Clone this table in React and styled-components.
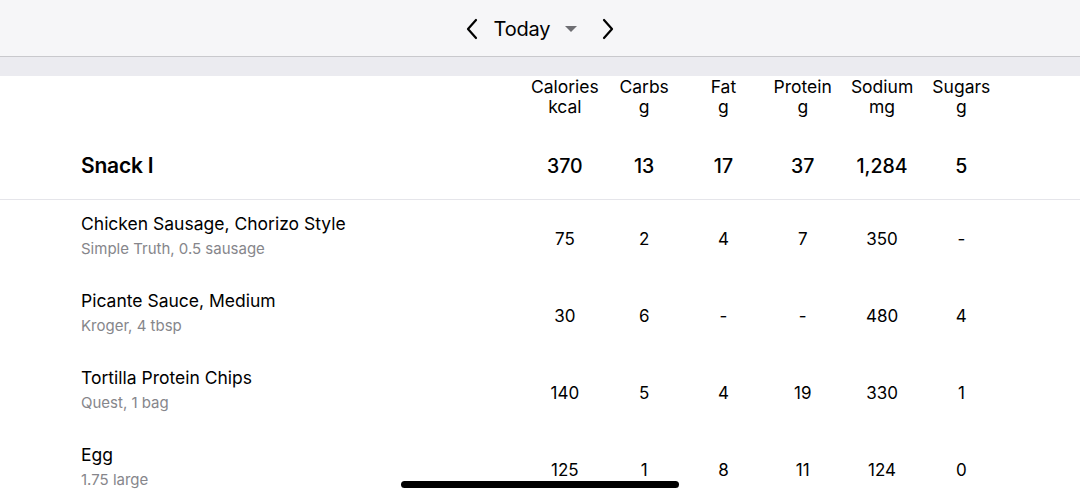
import React from 'react';
import styled, { createGlobalStyle } from 'styled-components';

const Global = createGlobalStyle`
  html, body { margin: 0; padding: 0; background: #fff; }
  body { font-family: Inter, "Noto Sans", sans-serif; color: #000; overflow: hidden; }
`;

const Page = styled.div`
  width: 1080px;
  height: 499px;
  overflow: hidden;
  position: relative;
`;

const NavBar = styled.div`
  height: 56px;
  background: #f6f6f8;
  border-bottom: 1px solid #c9c9cd;
  display: flex;
  align-items: center;
  justify-content: center;
`;

const NavButton = styled.span`
  display: flex;
  align-items: center;
  justify-content: center;
  width: 24px;
  height: 24px;
  margin: ${p => p.$side === 'left' ? '1px 10px 0 0' : '1px 0 0 19px'};
`;

const Title = styled.span`
  font-size: 20px;
  letter-spacing: -0.2px;
  display: flex;
  align-items: center;
  gap: 15px;
  margin-top: 1px;
`;

const Caret = styled.span`
  width: 0;
  height: 0;
  border-left: 6px solid transparent;
  border-right: 6px solid transparent;
  border-top: 6px solid #6e6e73;
  margin-top: 1px;
`;

const Band = styled.div`
  height: 19px;
  background: #ebebf0;
`;

const Row = styled.div`
  display: flex;
  align-items: ${p => p.$align || 'center'};
  height: ${p => p.$h}px;
  padding: 0 79px 0 81px;
  border-bottom: ${p => p.$line ? '1px solid #e5e5ea' : 'none'};
  box-sizing: border-box;
`;

const Label = styled.div`
  flex: 1;
  align-self: stretch;
  display: flex;
  flex-direction: column;
  justify-content: ${p => p.$top ? 'flex-start' : 'center'};
  padding-top: ${p => p.$top ? 13 : 0}px;
`;

const Cell = styled.div`
  width: 79.3px;
  text-align: center;
  font-size: ${p => p.$size || 17}px;
  font-weight: ${p => p.$bold ? 500 : 400};
  line-height: 20px;
  padding-top: ${p => p.$head ? 1 : 0}px;
`;

const MealName = styled.div`
  font-size: 21px;
  font-weight: 600;
  letter-spacing: -0.2px;
`;

const FoodName = styled.div`
  font-size: 17.5px;
  line-height: 22px;
`;

const FoodSub = styled.div`
  font-size: 15px;
  line-height: 22px;
  margin-top: 3px;
  color: #86868b;
`;

const HomeBar = styled.div`
  position: absolute;
  left: 401px;
  top: 481px;
  width: 278px;
  height: 7px;
  border-radius: 4px;
  background: #000;
`;

const Chevron = ({ dir }) => (
  <svg width="14" height="22" viewBox="0 0 14 22">
    <path
      d={dir === 'left' ? 'M11 2 L3 11 L11 20' : 'M3 2 L11 11 L3 20'}
      fill="none"
      stroke="#000"
      strokeWidth="2.2"
      strokeLinecap="round"
      strokeLinejoin="round"
    />
  </svg>
);

const columns = [
  ['Calories', 'kcal'],
  ['Carbs', 'g'],
  ['Fat', 'g'],
  ['Protein', 'g'],
  ['Sodium', 'mg'],
  ['Sugars', 'g'],
];

const foods = [
  { name: 'Chicken Sausage, Chorizo Style', sub: 'Simple Truth, 0.5 sausage', v: ['75', '2', '4', '7', '350', '-'] },
  { name: 'Picante Sauce, Medium', sub: 'Kroger, 4 tbsp', v: ['30', '6', '-', '-', '480', '4'] },
  { name: 'Tortilla Protein Chips', sub: 'Quest, 1 bag', v: ['140', '5', '4', '19', '330', '1'] },
  { name: 'Egg', sub: '1.75 large', v: ['125', '1', '8', '11', '124', '0'] },
];

export default function App() {
  return (
    <Page>
      <Global />
      <NavBar>
        <NavButton $side="left"><Chevron dir="left" /></NavButton>
        <Title>Today <Caret /></Title>
        <NavButton $side="right"><Chevron dir="right" /></NavButton>
      </NavBar>
      <Band />
      <Row $h={56} $align="flex-start">
        <Label />
        {columns.map(([a, b]) => (
          <Cell key={a} $size={17.5} $head>{a}<br />{b}</Cell>
        ))}
      </Row>
      <Row $h={68} $line>
        <Label><MealName>Snack I</MealName></Label>
        {['370', '13', '17', '37', '1,284', '5'].map((v, i) => (
          <Cell key={i} $size={19.5} $bold>{v}</Cell>
        ))}
      </Row>
      {foods.map(f => (
        <Row key={f.name} $h={77}>
          <Label $top>
            <FoodName>{f.name}</FoodName>
            <FoodSub>{f.sub}</FoodSub>
          </Label>
          {f.v.map((v, i) => <Cell key={i}>{v}</Cell>)}
        </Row>
      ))}
      <HomeBar />
    </Page>
  );
}
